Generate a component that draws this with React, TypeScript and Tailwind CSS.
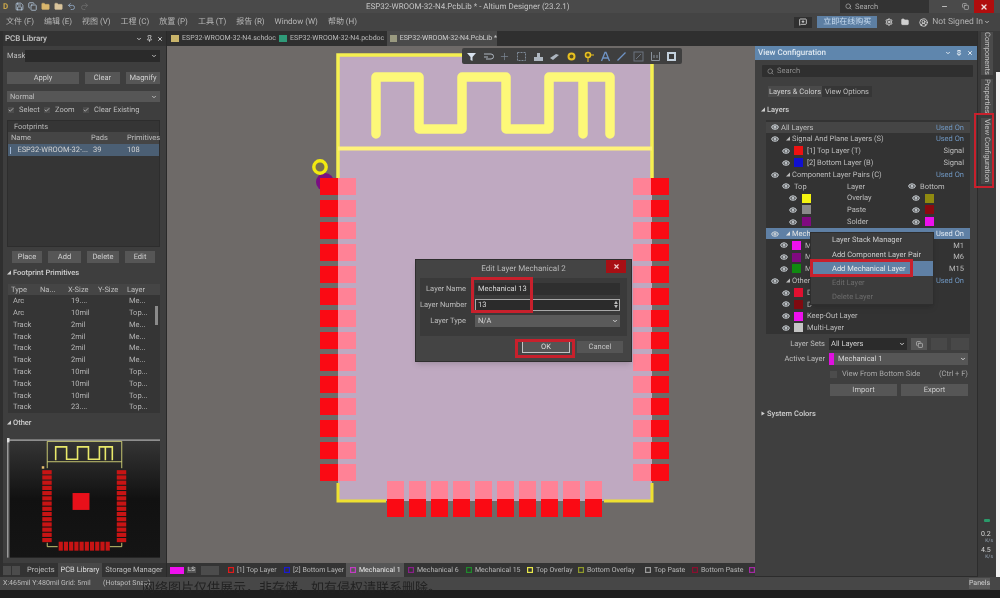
import { ChevronDown, Eye, Save, Folder, Undo2, Redo2, Search, X, Settings, CircleUserRound, Pin, Minus, Copy, MessageSquarePlus, Check, Plus } from "lucide-react";

const menus = ["文件 (F)", "编辑 (E)", "视图 (V)", "工程 (C)", "放置 (P)", "工具 (T)", "报告 (R)", "Window (W)", "帮助 (H)"];

const primitives = [
  ["Arc", "19....", "Me..."],
  ["Arc", "10mil", "Top..."],
  ["Track", "2mil", "Me..."],
  ["Track", "2mil", "Me..."],
  ["Track", "2mil", "Me..."],
  ["Track", "2mil", "Me..."],
  ["Track", "10mil", "Top..."],
  ["Track", "10mil", "Top..."],
  ["Track", "10mil", "Top..."],
  ["Track", "23....", "Top..."],
];

const layerTabs = [
  { color: "#e01b1b", label: "[1] Top Layer", w: "w-[56px]" },
  { color: "#1b1bd0", label: "[2] Bottom Layer", w: "w-[66px]" },
  { color: "#c23cc2", label: "Mechanical 1", w: "w-[58px]", active: true },
  { color: "#8a1f8a", label: "Mechanical 6", w: "w-[58px]" },
  { color: "#1f8a2b", label: "Mechanical 15", w: "w-[61px]" },
  { color: "#e8e84a", label: "Top Overlay", w: "w-[51px]" },
  { color: "#8f9a2a", label: "Bottom Overlay", w: "w-[67px]" },
  { color: "#9a9a9a", label: "Top Paste", w: "w-[47px]" },
  { color: "#8a1030", label: "Bottom Paste", w: "w-[57px]" },
  { color: "#a32aa3", label: "", w: "w-[10px]" },
];

const pitch = 22;
const sidePads = Array.from({ length: 14 }, (_, i) => 178 + i * pitch);
const bottomPads = Array.from({ length: 10 }, (_, i) => 387 + i * pitch);

function Btn({ label, className }: { label: string; className: string }) {
  return (
    <div className={`flex items-center justify-center bg-[#565656] text-[#cfcfcf] text-[7.5px] ${className}`}>
      {label}
    </div>
  );
}

function Tick({ label, className }: { label: string; className: string }) {
  return (
    <div className={`flex items-center gap-[5px] ${className}`}>
      <div className="w-[6px] h-[6px] bg-[#4c4c4c] flex items-center justify-center">
        <Check size={6} strokeWidth={3} className="text-[#c8c8c8]" />
      </div>
      <span>{label}</span>
    </div>
  );
}

function LeftPanel() {
  return (
    <aside className="w-[167px] shrink-0 pl-[3px] bg-[#2f2f2f] flex flex-col">
      <div className="flex-1 flex flex-col bg-[#3e3e3e] text-[7.5px] text-[#bdbdbd] border-r border-[#2a2a2a]">
        <div className="h-[15px] flex items-center justify-between px-[2px] bg-[#333333] text-[8px] font-medium text-[#c4c4c4]">
          <span>PCB Library</span>
          <div className="flex items-center gap-[4px] pr-[1px]">
            <ChevronDown size={6} strokeWidth={4} />
            <Pin size={7} strokeWidth={3} />
            <X size={6} strokeWidth={4} />
          </div>
        </div>
        <div className="mt-[4px] h-[12px] flex items-center pl-[4px] pr-[6px] gap-[2px]">
          <span className="w-[16px]">Mask</span>
          <div className="flex-1 h-full bg-[#2a2a2a] flex items-center justify-end pr-[3px]">
            <ChevronDown size={6} strokeWidth={4} />
          </div>
        </div>
        <div className="mt-[10px] h-[12px] flex pl-[4px] pr-[6px] gap-[6px]">
          <Btn label="Apply" className="w-[72px]" />
          <Btn label="Clear" className="w-[35px]" />
          <Btn label="Magnify" className="flex-1" />
        </div>
        <div className="mt-[7px] ml-[4px] mr-[6px] h-[11px] bg-[#565656] flex items-center justify-between px-[3px]">
          <span>Normal</span>
          <ChevronDown size={6} strokeWidth={4} />
        </div>
        <div className="mt-[3px] h-[10px] pl-[5px] flex items-center">
          <Tick label="Select" className="w-[36px]" />
          <Tick label="Zoom" className="w-[39px]" />
          <Tick label="Clear Existing" className="" />
        </div>
        <div className="mt-[5px] ml-[4px] mr-[6px] h-[127px] bg-[#353535] border border-[#2d2d2d]">
          <div className="h-[11px] pl-[6px] flex items-center text-[#b5b5b5]">Footprints</div>
          <div className="h-[12px] bg-[#454545] grid grid-cols-[80px_36px_1fr] pl-[3px] items-center">
            <span>Name</span>
            <span>Pads</span>
            <span>Primitives</span>
          </div>
          <div className="h-[12px] bg-[#4b5f74] grid grid-cols-[80px_36px_1fr] items-center text-[#d0d0d0]">
            <span className="pl-[2px] flex items-center gap-[6px]">
              <span className="w-[3px] h-[7px] bg-[#9fb6d4]" />
              <span>ESP32-WROOM-32-...</span>
            </span>
            <span className="pl-[5px]">39</span>
            <span className="pl-[3px]">108</span>
          </div>
        </div>
        <div className="mt-[4px] h-[12px] flex pl-[9px] gap-[6px]">
          <Btn label="Place" className="w-[30px]" />
          <Btn label="Add" className="w-[33px]" />
          <Btn label="Delete" className="w-[32px]" />
          <Btn label="Edit" className="w-[30px]" />
        </div>
        <div className="mt-[4px] h-[12px] pl-[4px] flex items-center gap-[2px] font-medium text-[#cfcfcf]">
          <span className="text-[4px]">◢</span>
          <span>Footprint Primitives</span>
        </div>
        <div className="mt-[5px] ml-[5px] mr-[6px] h-[129px] bg-[#353535] relative">
          <div className="h-[11px] bg-[#454545] grid grid-cols-[29px_28px_30px_29px_1fr] pl-[3px] items-center">
            <span>Type</span>
            <span>Na...</span>
            <span>X-Size</span>
            <span>Y-Size</span>
            <span>Layer</span>
          </div>
          {primitives.map((row, i) => (
            <div key={i} className="h-[11.8px] grid grid-cols-[58px_58px_1fr] pl-[5px] items-center text-[#b5b5b5]">
              <span>{row[0]}</span>
              <span>{row[1]}</span>
              <span>{row[2]}</span>
            </div>
          ))}
          <div className="absolute right-[2px] top-[22px] w-[3px] h-[19px] bg-[#8a8a8a]" />
        </div>
        <div className="mt-[4px] h-[12px] pl-[4px] flex items-center gap-[2px] font-medium text-[#cfcfcf]">
          <span className="text-[4px]">◢</span>
          <span>Other</span>
        </div>
        <Preview />
        <div className="flex-1" />
        <div className="h-[14px] flex items-center text-[7.5px] text-[#bcbcbc] bg-[#333333]">
          <div className="w-[19px] flex gap-[1px]">
            <span className="w-[8px] h-[9px] bg-[#4c4c4c]" />
            <span className="w-[8px] h-[9px] bg-[#4c4c4c]" />
          </div>
          <span className="ml-[7px]">Projects</span>
          <span className="ml-[3px] px-[3px] h-full flex items-center bg-[#484848] text-[#dcdcdc]">PCB Library</span>
          <span className="ml-[3px]">Storage Manager</span>
          <span className="ml-[6px]">M</span>
        </div>
      </div>
    </aside>
  );
}

function Preview() {
  return (
    <div className="mt-[9px] ml-[4px] mr-[6px] h-[120px] shrink-0">
      <svg viewBox="7 438 154 120" className="w-full h-full block">
        <defs>
          <linearGradient id="previewBg" x1="0" y1="0" x2="0" y2="1">
            <stop offset="0" stopColor="#353535" />
            <stop offset="0.5" stopColor="#111111" />
            <stop offset="1" stopColor="#151515" />
          </linearGradient>
        </defs>
        <rect x="10" y="440" width="151" height="118" fill="url(#previewBg)" />
        <rect x="7" y="439" width="154" height="1.5" fill="#9a9a9a" />
        <rect x="7" y="439" width="1.5" height="119" fill="#9a9a9a" />
        <rect x="7" y="437" width="2.5" height="5" fill="#e0e0e0" />
        <path d="M47.5 468V441H122.5V468M47.5 461.5H122.5M47.5 543V547H58M110 547H122.5V543" fill="none" stroke="#d8d87a" strokeWidth="0.9" />
        <path d="M56 460V446.5H67V459H78V446.5H89V459H100V446.5H113V460M106 446.5V460" fill="none" stroke="#e8e86a" strokeWidth="1.6" />
        {sidePads.map((_, i) => (
          <g key={i}>
            <rect x="42.5" y={470 + i * 5.25} width="9.5" height="4.2" fill="#c81414" />
            <rect x="117.5" y={470 + i * 5.25} width="9.5" height="4.2" fill="#c81414" />
          </g>
        ))}
        {bottomPads.map((_, i) => (
          <rect key={i} x={59 + i * 5.25} y="542" width="4.2" height="9" fill="#c81414" />
        ))}
        <rect x="73" y="493" width="17" height="17" fill="#e8101a" />
        <rect x="42" y="466" width="2.5" height="2.5" fill="#e8c070" />
      </svg>
    </div>
  );
}

function BoardArt() {
  return (
    <svg viewBox="167 46 588 517" className="w-full h-full block">
      <rect x="338" y="55" width="314" height="446" fill="#bfa9c1" />
      <circle cx="325" cy="182" r="9" fill="#7a0f82" />
      <path d="M338 178V55H652V178" fill="none" stroke="#f5f050" strokeWidth="3.5" />
      <path d="M338 148.5H652" stroke="#fff27a" strokeWidth="4" />
      <path d="M338 483V501H386M604 501H652V483" fill="none" stroke="#eee030" strokeWidth="3" />
      <path
        d="M376 134V77H419V129H462V77H506V129H549V77H610V134M583 77V134"
        fill="none"
        stroke="#fdf878"
        strokeWidth="9.5"
        strokeLinecap="round"
        strokeLinejoin="round"
      />
      <circle cx="320" cy="167" r="6.2" fill="#777050" stroke="#f2ea10" strokeWidth="3.4" />
      {sidePads.map((y) => (
        <g key={y}>
          <rect x="320" y={y} width="18" height="17" fill="#fa0a14" />
          <rect x="338" y={y} width="18" height="17" fill="#ff8296" />
          <rect x="633" y={y} width="18" height="17" fill="#ff8296" />
          <rect x="651" y={y} width="18" height="17" fill="#fa0a14" />
        </g>
      ))}
      {bottomPads.map((x) => (
        <g key={x}>
          <rect x={x} y="481" width="17" height="18" fill="#ff8296" />
          <rect x={x} y="499" width="17" height="18" fill="#fa0a14" />
        </g>
      ))}
    </svg>
  );
}

function Toolbar() {
  const stroke = "#aeb6c0";
  return (
    <div className="absolute left-[295px] top-[2px] w-[220px] h-[16px] rounded-[2px] bg-[#3f3f3f] flex items-center pl-[4px] gap-[5.7px]">
      <svg viewBox="0 0 11 11" className="w-[11px] h-[11px]"><path d="M1 2H10L6.5 6V10L4.5 9V6Z" fill="#d8e2ee" /></svg>
      <svg viewBox="0 0 11 11" className="w-[11px] h-[11px]"><path d="M1 3H8A2.5 2.5 0 0 1 8 8H3M1 6H5" fill="none" stroke={stroke} /></svg>
      <Plus size={11} strokeWidth={1.5} className="text-[#7f8b99]" />
      <svg viewBox="0 0 11 11" className="w-[11px] h-[11px]"><rect x="1.5" y="1.5" width="8" height="8" fill="none" stroke="#7f8b99" strokeDasharray="2 1" /></svg>
      <svg viewBox="0 0 11 11" className="w-[11px] h-[11px]"><path d="M1 6H4V2H7V6H10V10H1Z" fill={stroke} /></svg>
      <svg viewBox="0 0 11 11" className="w-[11px] h-[11px]"><path d="M1 7L7 3L10 4L4 9Z" fill={stroke} /></svg>
      <svg viewBox="0 0 11 11" className="w-[11px] h-[11px]"><circle cx="5.5" cy="5.5" r="3" fill="#5a5020" stroke="#e8c020" strokeWidth="2" /></svg>
      <svg viewBox="0 0 11 11" className="w-[11px] h-[11px]"><circle cx="5" cy="4" r="2.5" fill="#5a5020" stroke="#e8c020" strokeWidth="1.6" /><path d="M5 7V11M8 4H11" stroke="#e8c020" /></svg>
      <svg viewBox="0 0 11 11" className="w-[11px] h-[11px]"><path d="M1.5 10L5 1.5H6L9.5 10M3 7H8" fill="none" stroke="#6f93c4" strokeWidth="1.3" /></svg>
      <svg viewBox="0 0 11 11" className="w-[11px] h-[11px]"><path d="M1.5 9.5L9.5 1.5" stroke="#6f93c4" strokeWidth="1.3" /></svg>
      <svg viewBox="0 0 11 11" className="w-[11px] h-[11px]"><rect x="1" y="1" width="9" height="9" fill="none" stroke="#6c7480" /><path d="M3 8L8 3" stroke="#6c7480" /></svg>
      <svg viewBox="0 0 11 11" className="w-[11px] h-[11px]"><path d="M1.5 1V9.5H9.5V1M4 7V4M7 7V4" fill="none" stroke="#8a929c" /></svg>
      <svg viewBox="0 0 11 11" className="w-[11px] h-[11px]"><rect x="1" y="1" width="9" height="9" fill="#c3d0dc" /><rect x="3" y="3" width="5" height="5" fill="#3b3b3b" /></svg>
    </div>
  );
}

function EditDialog() {
  return (
    <div className="absolute left-[248px] top-[213px] w-[217px] h-[103px] bg-[#444444] border border-[#2e2e2e] text-[7.5px] text-[#bdbdbd] shadow-md">
      <div className="h-[18px] relative flex items-center justify-center text-[8px] text-[#b8b8b8]">
        <span>Edit Layer Mechanical 2</span>
        <div className="absolute right-[5px] top-0 w-[20px] h-[13px] bg-[#a80f14] flex items-center justify-center">
          <X size={7} strokeWidth={4} className="text-[#f0d0d0]" />
        </div>
      </div>
      <div className="mx-[4px] h-[58px] bg-[#3a3a3a] pt-[5px] flex flex-col gap-[4px] pr-[7px]">
        <div className="h-[12px] flex items-center">
          <span className="w-[46px] text-right mr-[9px]">Layer Name</span>
          <div className="flex-1 h-full bg-[#2f2f2f] pl-[3px] flex items-center text-[#d6d6d6]">Mechanical 13</div>
        </div>
        <div className="h-[12px] flex items-center">
          <span className="w-[46px] text-right mr-[9px]">Layer Number</span>
          <div className="flex-1 h-full bg-[#2b2b2b] border border-[#a8a8a8] pl-[2px] flex items-center justify-between text-[#d6d6d6]">
            <span>13</span>
            <span className="text-[4px] leading-[4px] pr-[1px] text-[#bbbbbb]">▲<br />▼</span>
          </div>
        </div>
        <div className="h-[12px] flex items-center">
          <span className="w-[46px] text-right mr-[9px]">Layer Type</span>
          <div className="flex-1 h-full bg-[#5a5a5a] pl-[3px] pr-[2px] flex items-center justify-between text-[#d6d6d6]">
            <span>N/A</span>
            <ChevronDown size={6} strokeWidth={4} />
          </div>
        </div>
      </div>
      <div className="mt-[5px] flex justify-end gap-[7px] pr-[8px]">
        <div className="w-[48px] h-[12px] bg-[#555555] border border-[#c4c4c4] flex items-center justify-center text-[#dddddd]">OK</div>
        <div className="w-[46px] h-[12px] bg-[#555555] flex items-center justify-center text-[#c4c4c4]">Cancel</div>
      </div>
    </div>
  );
}

function Center() {
  return (
    <main className="w-[588px] shrink-0 flex flex-col">
      <div className="h-[15px] bg-[#2f2f2f] flex items-end text-[7px] text-[#bcbcbc] pl-[4px]">
        <div className="w-[108px] h-full flex items-center gap-[3px]">
          <span className="w-[8px] h-[7px] bg-[#c9b46a]" />
          <span>ESP32-WROOM-32-N4.schdoc</span>
        </div>
        <div className="w-[108px] h-full flex items-center gap-[3px]">
          <span className="w-[8px] h-[7px] bg-[#2f9a78]" />
          <span>ESP32-WROOM-32-N4.pcbdoc</span>
        </div>
        <div className="h-full w-[110px] pl-[3px] bg-[#4a4a4a] flex items-center gap-[3px] text-[#d0d0d0]">
          <span className="w-[8px] h-[7px] bg-[#9a9a80]" />
          <span>ESP32-WROOM-32-N4.PcbLib *</span>
        </div>
      </div>
      <div className="relative flex-1 min-h-0 bg-[#6e6a68]">
        <BoardArt />
        <Toolbar />
        <EditDialog />
        <div className="absolute left-[304px] top-[231px] w-[62px] h-[36px] border-[3px] border-[#c8202c]" />
        <div className="absolute left-[348px] top-[293px] w-[60px] h-[19px] border-[3px] border-[#c8202c]" />
      </div>
      <div className="h-[14px] bg-[#343434] flex items-center text-[7px] text-[#b8b8b8] whitespace-nowrap">
        <span className="ml-[3px] w-[14px] h-[7px] bg-[#f010f0]" />
        <span className="ml-[3px] w-[9px] bg-[#555555] text-center text-[6px] text-[#d0d0d0]">LS</span>
        <span className="ml-[5px] w-[18px] h-[9px] bg-[#4c4c4c]" />
        <div className="ml-[5px] flex h-full items-center">
          {layerTabs.map((t) => (
            <div key={t.label || "end"} className={`${t.w} shrink-0 h-full pl-[4px] flex items-center gap-[3px] ${t.active ? "bg-[#565656] text-[#e8e8e8]" : ""}`}>
              <svg viewBox="0 0 6 6" className="w-[6px] h-[6px] shrink-0"><rect x="0.5" y="0.5" width="5" height="5" fill="none" stroke={t.color} strokeWidth="1.4" /></svg>
              <span>{t.label}</span>
            </div>
          ))}
        </div>
      </div>
    </main>
  );
}

type Row = { kind: "group" | "layer" | "triple"; pad: string; label: string; right?: string; color?: string; color2?: string; active?: boolean; head?: boolean; clip?: string };

// labels that run under the context menu are cut at its edge
const rows: Row[] = [
  { kind: "group", pad: "pl-[5px]", label: "All Layers", right: "Used On", head: true },
  { kind: "group", pad: "pl-[5px]", label: "Signal And Plane Layers (S)", right: "Used On" },
  { kind: "layer", pad: "pl-[16px]", label: "[1] Top Layer (T)", right: "Signal", color: "#ee1111" },
  { kind: "layer", pad: "pl-[16px]", label: "[2] Bottom Layer (B)", right: "Signal", color: "#1010d0" },
  { kind: "group", pad: "pl-[5px]", label: "Component Layer Pairs (C)", right: "Used On" },
  { kind: "triple", pad: "pl-[16px]", label: "Layer" },
  { kind: "triple", pad: "pl-[23px]", label: "Overlay", color: "#f4f410", color2: "#8f8a10" },
  { kind: "triple", pad: "pl-[23px]", label: "Paste", color: "#8a8a8a", color2: "#8a0a10" },
  { kind: "triple", pad: "pl-[23px]", label: "Solder", color: "#800a80", color2: "#ee10ee" },
  { kind: "group", pad: "pl-[5px]", label: "Mech", right: "Used On", active: true },
  { kind: "layer", pad: "pl-[14px]", label: "M", right: "M1", color: "#ee10ee" },
  { kind: "layer", pad: "pl-[14px]", label: "M", right: "M6", color: "#800a80" },
  { kind: "layer", pad: "pl-[14px]", label: "M", right: "M15", color: "#108a10" },
  { kind: "group", pad: "pl-[5px]", label: "Other", right: "Used On" },
  { kind: "layer", pad: "pl-[16px]", label: "D", color: "#e01030" },
  { kind: "layer", pad: "pl-[16px]", label: "D", color: "#800a10" },
  { kind: "layer", pad: "pl-[16px]", label: "Keep-Out Layer", color: "#ee10ee" },
  { kind: "layer", pad: "pl-[16px]", label: "Multi-Layer", color: "#c4c4c4" },
];

function EyeDot() {
  return <Eye size={8} strokeWidth={3.2} className="text-[#cdd3d8] shrink-0" />;
}

function LayerRow({ row }: { row: Row }) {
  const base = `h-[11.8px] flex items-center ${row.pad} pr-[6px] ${row.active ? "bg-[#5f80a5] text-[#e4e4e4]" : ""} ${row.head ? "bg-[#454545]" : ""}`;
  if (row.kind === "triple") {
    if (!row.color) {
      return (
        <div className={base}>
          <EyeDot />
          <span className="ml-[4px] w-[53px]">Top</span>
          <span className="w-[61px]">{row.label}</span>
          <EyeDot />
          <span className="ml-[4px]">Bottom</span>
        </div>
      );
    }
    return (
      <div className={base}>
        <EyeDot />
        <span className="ml-[5px] w-[9px] h-[9px] shrink-0" style={{ backgroundColor: row.color }} />
        <span className="ml-[36px] w-[65px]">{row.label}</span>
        <EyeDot />
        <span className="ml-[5px] w-[9px] h-[9px] shrink-0" style={{ backgroundColor: row.color2 }} />
      </div>
    );
  }
  if (row.kind === "layer") {
    return (
      <div className={base}>
        <EyeDot />
        <span className="ml-[4px] w-[9px] h-[9px] shrink-0" style={{ backgroundColor: row.color }} />
        <span className="ml-[4px]">{row.label}</span>
        <span className="ml-auto">{row.right}</span>
      </div>
    );
  }
  return (
    <div className={base}>
      <EyeDot />
      {row.head ? null : <span className="ml-[7px] text-[4px]">◢</span>}
      <span className="ml-[2px]">{row.label}</span>
      <span className={`ml-auto ${row.active ? "text-[#dfe7f0]" : "text-[#6f96c0]"}`}>{row.right}</span>
    </div>
  );
}

function ContextMenu() {
  return (
    <div className="absolute left-[55px] top-[201px] w-[124px] h-[73px] bg-[#3c3c3c] border border-[#2e2e2e] shadow-md text-[7.5px] text-[#cacaca] flex flex-col justify-center">
      <div className="h-[14.2px] pl-[21px] flex items-center">Layer Stack Manager</div>
      <div className="h-[14.2px] pl-[21px] flex items-center">Add Component Layer Pair</div>
      <div className="h-[14.2px] pl-[21px] flex items-center bg-[#5f80a5] text-[#e8e8e8]">Add Mechanical Layer</div>
      <div className="h-[14.2px] pl-[21px] flex items-center text-[#6c6c6c]">Edit Layer</div>
      <div className="h-[14.2px] pl-[21px] flex items-center text-[#6c6c6c]">Delete Layer</div>
    </div>
  );
}

function RightPanel() {
  return (
    <aside className="relative w-[223px] shrink-0 flex flex-col bg-[#3f3f3f] text-[7.5px] text-[#bdbdbd] border-b border-[#2c2c2c] border-r">
      <div className="h-[15px] bg-[#2f2f2f]" />
      <div className="h-[14px] bg-[#5f86ad] flex items-center justify-between pl-[3px] pr-[4px] text-[8px] font-medium text-[#dfe8f0]">
        <span>View Configuration</span>
        <div className="flex items-center gap-[5px]">
          <ChevronDown size={6} strokeWidth={4} />
          <Pin size={6} strokeWidth={4} />
          <X size={6} strokeWidth={4} />
        </div>
      </div>
      <div className="mt-[5px] mx-[7px] w-[211px] h-[12px] bg-[#2f2f2f] rounded-[1px] flex items-center pl-[5px] gap-[3px] text-[#8e8e8e]">
        <Search size={7} strokeWidth={2.5} />
        <span>Search</span>
      </div>
      <div className="mt-[9px] ml-[13px] h-[11px] flex">
        <div className="w-[54px] bg-[#4a4a4a] text-[#d0d0d0] flex items-center justify-center">Layers &amp; Colors</div>
        <div className="w-[50px] bg-[#363636] flex items-center justify-center">View Options</div>
      </div>
      <div className="mt-[7px] ml-[6px] h-[12px] flex items-center gap-[2px] font-medium text-[#cfcfcf]">
        <span className="text-[4px]">◢</span>
        <span>Layers</span>
      </div>
      <div className="mt-[4px] ml-[11px] w-[204px] h-[214px] bg-[#333333] pt-[1.5px]">
        {rows.map((r, i) => (
          <LayerRow key={i} row={r} />
        ))}
      </div>
      <div className="mt-[4px] h-[12px] flex items-center">
        <span className="w-[70px] text-right mr-[4px]">Layer Sets</span>
        <div className="w-[78px] h-full bg-[#2b2b2b] flex items-center justify-between px-[2px] text-[#d0d0d0]">
          <span>All Layers</span>
          <ChevronDown size={6} strokeWidth={4} />
        </div>
        <div className="ml-[4px] w-[16px] h-full bg-[#565656] flex items-center justify-center">
          <Copy size={7} strokeWidth={2.5} />
        </div>
        <div className="ml-[4px] w-[16px] h-full bg-[#484848]" />
        <div className="ml-[4px] w-[18px] h-full bg-[#484848]" />
      </div>
      <div className="mt-[3px] h-[12px] flex items-center">
        <span className="w-[70px] text-right mr-[4px]">Active Layer</span>
        <div className="w-[139px] h-full bg-[#565656] flex items-center justify-between pr-[2px] text-[#d6d6d6]">
          <span className="flex items-center gap-[4px]">
            <span className="w-[5px] h-[12px] bg-[#e010e0]" />
            <span>Mechanical 1</span>
          </span>
          <ChevronDown size={6} strokeWidth={4} />
        </div>
      </div>
      <div className="mt-[3px] h-[12px] pl-[75px] flex items-center">
        <span className="w-[7px] h-[7px] bg-[#4c4c4c]" />
        <span className="ml-[5px] text-[#a8a8a8]">View From Bottom Side</span>
        <span className="ml-auto mr-[9px] text-[#a8a8a8]">(Ctrl + F)</span>
      </div>
      <div className="mt-[4px] h-[12px] pl-[75px] flex gap-[4px]">
        <Btn label="Import" className="w-[67px]" />
        <Btn label="Export" className="w-[67px]" />
      </div>
      <div className="mt-[12px] ml-[6px] h-[12px] flex items-center gap-[2px] font-medium text-[#cfcfcf]">
        <span className="text-[4px]">▶</span>
        <span>System Colors</span>
      </div>
      <ContextMenu />
      <div className="absolute left-[55px] top-[228px] w-[103px] h-[18px] border-[3px] border-[#c8202c]" />
    </aside>
  );
}

function SideStrip() {
  return (
    <div className="w-[18px] shrink-0 bg-[#3a3a3a] flex flex-col items-center text-[7.5px] text-[#c0c0c0] relative">
      <div className="mt-[1px] w-[12px] h-[43px] bg-[#4a4a4a] flex items-center justify-center [writing-mode:vertical-rl]">Components</div>
      <div className="mt-[4px] w-[12px] h-[34px] bg-[#4a4a4a] flex items-center justify-center [writing-mode:vertical-rl]">Properties</div>
      <div className="mt-[5px] w-[12px] h-[66px] bg-[#4a4a4a] flex items-center justify-center [writing-mode:vertical-rl]">View Configuration</div>
      <div className="flex-1" />
      <div className="w-[6px] h-[3px] rounded-[1px] bg-[#2a9a6a] mb-[9px]" />
      <div className="w-full mb-[17px] pl-[3px] text-[7px] leading-[7px] text-[#d8d8d8]">
        <div>0.2</div>
        <div className="text-[5px] leading-[6px] text-right pr-[3px] text-[#9aa8b8]">K/s</div>
        <div className="mt-[3px]">4.5</div>
        <div className="text-[5px] leading-[6px] text-right pr-[3px] text-[#9aa8b8]">K/s</div>
      </div>
      <div className="absolute left-[-4px] top-[82px] w-[20px] h-[75px] border-[2px] border-[#c8202c]" />
    </div>
  );
}

export default function App() {
  return (
    <div className="relative w-[1000px] h-[598px] overflow-hidden flex flex-col bg-[#3a3a3a] font-['Roboto','Noto_Sans_CJK_SC',sans-serif] whitespace-nowrap leading-none [text-rendering:geometricPrecision] blur-[0.35px]">
      {/* title bar */}
      <header className="relative h-[13px] shrink-0 bg-[#4a4a4a] flex items-center text-[8px] text-[#c4c4c4]">
        <div className="ml-[3px] flex items-center gap-[4px]">
          <span className="w-[8px] text-[#c9a64a] font-bold">D</span>
          <Save size={9} strokeWidth={2} className="text-[#bcd0e6]" />
          <Copy size={9} strokeWidth={2} className="text-[#bcd0e6]" />
          <Folder size={9} fill="#d9b66c" strokeWidth={1} className="text-[#d9b66c]" />
          <Folder size={9} fill="#d9c49c" strokeWidth={1} className="text-[#d9c49c]" />
          <Undo2 size={9} strokeWidth={2.4} className="text-[#8fa5bf]" />
          <Redo2 size={9} strokeWidth={2.4} className="text-[#6b6b6b]" />
        </div>
        <span className="absolute left-[366px]">ESP32-WROOM-32-N4.PcbLib * - Altium Designer (23.2.1)</span>
        <div className="ml-auto h-full w-[89px] mr-[12px] bg-[#333333] flex items-center pl-[5px] gap-[3px] text-[7.5px] text-[#a8a8a8]">
          <Search size={7} strokeWidth={2.5} />
          <span>Search</span>
        </div>
        <Minus size={7} strokeWidth={3} className="text-[#cccccc] mr-[14px]" />
        <Copy size={7} strokeWidth={2} className="text-[#cccccc] mr-[5px]" />
        <div className="w-[20px] h-full mr-[6px] bg-[#b00d0d] flex items-center justify-center">
          <X size={8} strokeWidth={4} className="text-[#f0dcdc]" />
        </div>
      </header>
      {/* menu bar */}
      <nav className="h-[18px] shrink-0 bg-[#444444] flex items-center pl-[6px] text-[8px] text-[#b8b8b8]">
        <div className="flex items-center gap-[10px]">
          {menus.map((m) => (
            <span key={m}>{m}</span>
          ))}
        </div>
        <div className="ml-auto flex items-center pr-[10px]">
          <div className="w-[18px] h-[11px] bg-[#303030] flex items-center justify-center mr-[5px]">
            <MessageSquarePlus size={8} strokeWidth={2.5} className="text-[#e0e0e0]" />
          </div>
          <div className="w-[60px] h-[12px] bg-[#5d7fa3] flex items-center justify-center text-[8px] text-[#c8dcf0] mr-[8px]">立即在线购买</div>
          <Settings size={8} strokeWidth={3} className="text-[#e0e0e0] mr-[8px]" />
          <Folder size={8} strokeWidth={2} fill="#d0d0d0" className="text-[#d0d0d0] mr-[10px]" />
          <CircleUserRound size={9} strokeWidth={2.2} className="text-[#e0e0e0] mr-[4px]" />
          <span className="text-[8.5px] text-[#b0b0b0]">Not Signed In</span>
          <ChevronDown size={6} strokeWidth={4} className="ml-[1px]" />
        </div>
      </nav>
      {/* workspace */}
      <div className="flex-1 min-h-0 flex">
        <LeftPanel />
        <Center />
        <RightPanel />
        <SideStrip />
        <div className="flex-1 flex flex-col">
          <div className="h-[41px] bg-[#3a3a3a]" />
          <div className="flex-1 bg-[#f2f2f2]" />
        </div>
      </div>
      {/* status bar */}
      <footer className="h-[13px] shrink-0 bg-[#474747] flex items-center pl-[3px] text-[7px] text-[#bdbdbd]">
        <span className="w-[58px]">X:465mil Y:480mil</span>
        <span className="w-[42px]">Grid: 5mil</span>
        <span>(Hotspot Snap)</span>
        <span className="ml-auto mr-[10px] w-[21px] h-[11px] bg-[#5a5a5a] flex items-center justify-center text-[#d0d0d0]">Panels</span>
      </footer>
      <div className="h-[8px] shrink-0 bg-[#1e1e1e]" />
      <span className="absolute left-[142px] top-[582px] text-[13px] text-[#222222]">网络图片仅供展示，非存储，如有侵权请联系删除。</span>
    </div>
  );
}
